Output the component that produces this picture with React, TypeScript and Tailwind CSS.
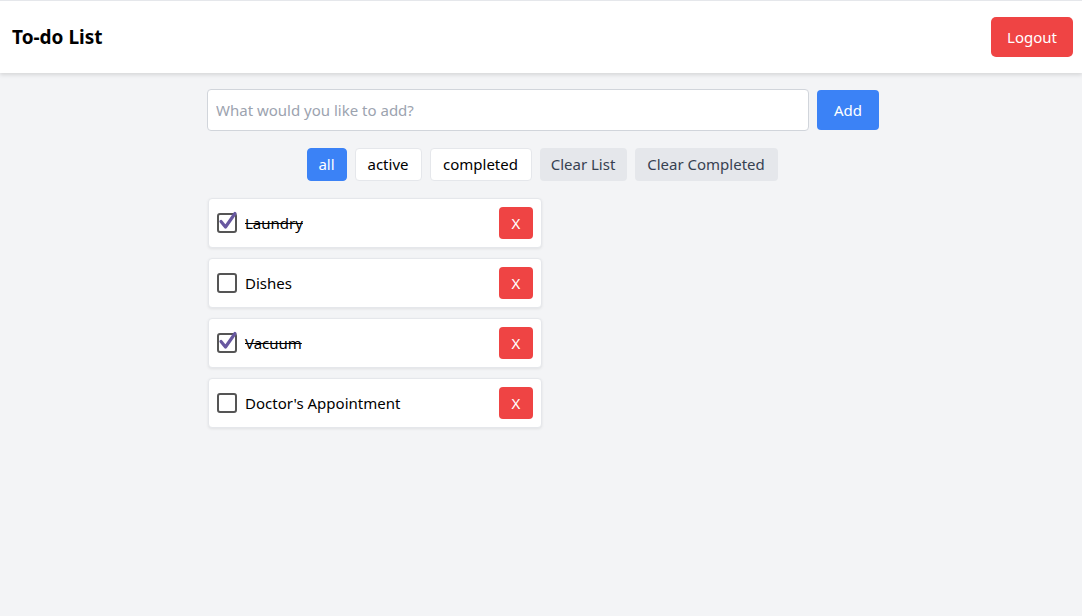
import { useState } from 'react';

type Todo = { id: number; text: string; done: boolean };

const initialTodos: Todo[] = [
  { id: 1, text: 'Laundry', done: true },
  { id: 2, text: 'Dishes', done: false },
  { id: 3, text: 'Vacuum', done: true },
  { id: 4, text: "Doctor's Appointment", done: false },
];

const filterWidths: Record<string, string> = {
  all: 'w-[40px]',
  active: 'w-[67px]',
  completed: 'w-[102px]',
};

function CheckBox({ checked, onChange }: { checked: boolean; onChange: () => void }) {
  return (
    <button onClick={onChange} className="relative w-5 h-5 shrink-0 border-2 border-[#555555] rounded-[3px] bg-white">
      {checked && (
        <svg className="absolute -left-[1px] -top-[4px]" width="20" height="20" viewBox="0 0 20 20" fill="none">
          <path d="M3 10.5 L7.5 16 L17 2.5" stroke="#6858a0" strokeWidth="3.2" strokeLinecap="round" strokeLinejoin="round" />
        </svg>
      )}
    </button>
  );
}

export default function App() {
  const [todos, setTodos] = useState<Todo[]>(initialTodos);
  const [filter, setFilter] = useState('all');
  const [text, setText] = useState('');

  const addTodo = () => {
    if (!text.trim()) return;
    setTodos([...todos, { id: Date.now(), text, done: false }]);
    setText('');
  };

  const shown = todos.filter((t) =>
    filter === 'active' ? !t.done : filter === 'completed' ? t.done : true
  );

  return (
    <div className="min-h-screen bg-[#f3f4f6] font-['Noto_Sans',sans-serif] text-black">
      <header className="bg-white border-t border-[#e5e7eb] h-[73px] flex items-center justify-between pl-3 pr-[9px] shadow-[0_2px_4px_rgba(0,0,0,0.12)]">
        <h1 className="text-[19px] font-bold">To-do List</h1>
        <button className="bg-[#ef4444] text-white rounded-[5px] w-[82px] h-10 text-[15px]">Logout</button>
      </header>

      <main className="w-[676px] pl-1 mx-auto pt-4">
        <div className="flex gap-2">
          <input
            value={text}
            onChange={(e) => setText(e.target.value)}
            placeholder="What would you like to add?"
            className="flex-1 h-[42px] px-2 bg-white border border-[#d1d5db] rounded text-[15px] placeholder:text-[#9ca3af] outline-none"
          />
          <button onClick={addTodo} className="bg-[#3b82f6] text-white rounded w-[62px] h-10 mt-px text-[15px]">Add</button>
        </div>

        <div className="flex justify-center gap-2 mt-[17px] pr-[2px]">
          {['all', 'active', 'completed'].map((f) => (
            <button
              key={f}
              onClick={() => setFilter(f)}
              className={
                filterWidths[f] +
                (f === filter
                  ? ' bg-[#3b82f6] text-white rounded h-[33px] text-[15px] border border-[#3b82f6]'
                  : ' bg-white border border-[#e5e7eb] rounded h-[33px] text-[15px]')
              }
            >
              {f}
            </button>
          ))}
          <button onClick={() => setTodos([])} className="w-[87px] bg-[#e5e7eb] text-[#374151] rounded h-[33px] text-[15px]">Clear List</button>
          <button onClick={() => setTodos(todos.filter((t) => !t.done))} className="w-[143px] bg-[#e5e7eb] text-[#374151] rounded h-[33px] text-[15px]">Clear Completed</button>
        </div>

        <ul className="w-[334px] ml-px mt-[17px] flex flex-col gap-[10px]">
          {shown.map((t) => (
            <li key={t.id} className="bg-white border border-[#e5e7eb] rounded shadow-[0_1px_3px_rgba(0,0,0,0.08)] h-[50px] flex items-center pl-2 pr-2">
              <CheckBox checked={t.done} onChange={() => setTodos(todos.map((x) => (x.id === t.id ? { ...x, done: !x.done } : x)))} />
              <span className={'ml-2 flex-1 text-[15px] ' + (t.done ? 'line-through' : '')}>{t.text}</span>
              <button onClick={() => setTodos(todos.filter((x) => x.id !== t.id))} className="bg-[#ef4444] text-white rounded w-[34px] h-8 text-[15px]">X</button>
            </li>
          ))}
        </ul>
      </main>
    </div>
  );
}
